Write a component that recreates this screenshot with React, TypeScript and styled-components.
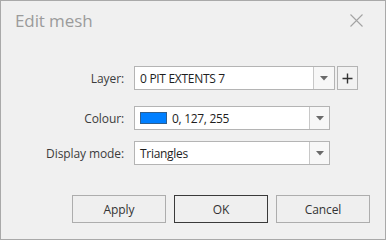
import React from 'react'
import styled, { createGlobalStyle } from 'styled-components'

const GlobalStyle = createGlobalStyle`
  html, body {
    margin: 0;
    padding: 0;
    background: #f0f0f0;
  }
  body {
    font-family: 'Open Sans', 'Noto Sans', sans-serif;
  }
`

const Dialog = styled.div`
  box-sizing: border-box;
  width: 386px;
  height: 240px;
  border: 1px solid #a9a9a9;
  background: #f0f0f0;
  display: flex;
  flex-direction: column;
`

const TitleBar = styled.div`
  display: flex;
  align-items: center;
  justify-content: space-between;
  height: 38px;
  padding: 0 22px 0 14px;
`

const Title = styled.span`
  font-size: 17px;
  color: #9b9b9b;
  letter-spacing: -0.1px;
`

const Form = styled.div`
  display: flex;
  flex-direction: column;
  margin-top: 27px;
`

const FieldRow = styled.div<{ $gap: number }>`
  display: grid;
  grid-template-columns: 114px auto;
  column-gap: 10px;
  align-items: center;
  margin-left: 9px;
  margin-bottom: ${(p) => p.$gap}px;
`

const Label = styled.label`
  text-align: right;
  font-size: 12px;
  letter-spacing: -0.1px;
  color: #3c3c3c;
`

const FieldLine = styled.div`
  display: flex;
  gap: 2px;
`

const Combo = styled.div<{ $width: number }>`
  box-sizing: border-box;
  width: ${(p) => p.$width}px;
  height: 24px;
  display: flex;
  border: 1px solid #b4b4b4;
  background: #fff;
`

const ComboText = styled.div`
  flex: 1;
  display: flex;
  align-items: center;
  gap: 5px;
  padding-left: 5px;
  font-size: 12px;
  letter-spacing: -0.3px;
  color: #1e1e1e;
  white-space: nowrap;
`

const ComboArrow = styled.div<{ $width?: number }>`
  width: ${(p) => p.$width ?? 19}px;
  border-left: 1px solid #c8c8c8;
  background: #f7f7f7;
  display: flex;
  align-items: center;
  justify-content: center;
`

const Swatch = styled.span`
  box-sizing: border-box;
  width: 27px;
  height: 12px;
  background: #007fff;
  border: 1px solid #2f5f8f;
`

const SmallButton = styled.div`
  box-sizing: border-box;
  width: 21px;
  height: 24px;
  border: 1px solid #b4b4b4;
  background: #f2f2f2;
  display: flex;
  align-items: center;
  justify-content: center;
`

const Footer = styled.div`
  margin-top: auto;
  display: flex;
  justify-content: flex-end;
  gap: 8px;
  padding: 0 15px 16px 0;
`

const Button = styled.button<{ $default?: boolean }>`
  box-sizing: border-box;
  width: 94px;
  height: 28px;
  background: #efefef;
  border: 1px solid ${(p) => (p.$default ? '#3a3a3a' : '#adadad')};
  font-family: 'Open Sans', 'Noto Sans', sans-serif;
  font-size: 12px;
  letter-spacing: -0.1px;
  color: #333;
  padding: 0;
`

const Arrow = () => (
  <svg width="8" height="5" viewBox="0 0 8 5">
    <path d="M0 0 H8 L4 4.5 Z" fill="#6a6a6a" />
  </svg>
)

const App = () => (
  <>
    <GlobalStyle />
    <Dialog>
      <TitleBar>
        <Title>Edit mesh</Title>
        <svg width="13" height="13" viewBox="0 0 13 13">
          <path d="M0.5 0.5 L12.5 12.5 M12.5 0.5 L0.5 12.5" stroke="#a3a3a3" strokeWidth="1.1" />
        </svg>
      </TitleBar>
      <Form>
        <FieldRow $gap={16}>
          <Label>Layer:</Label>
          <FieldLine>
            <Combo $width={201}>
              <ComboText>0 PIT EXTENTS 7</ComboText>
              <ComboArrow $width={20}>
                <Arrow />
              </ComboArrow>
            </Combo>
            <SmallButton>
              <svg width="11" height="11" viewBox="0 0 11 11">
                <path d="M5.5 0.5 V10.5 M0.5 5.5 H10.5" stroke="#333" strokeWidth="1.4" />
              </svg>
            </SmallButton>
          </FieldLine>
        </FieldRow>
        <FieldRow $gap={11}>
          <Label>Colour:</Label>
          <Combo $width={196}>
            <ComboText>
              <Swatch />
              0, 127, 255
            </ComboText>
            <ComboArrow>
              <Arrow />
            </ComboArrow>
          </Combo>
        </FieldRow>
        <FieldRow $gap={0}>
          <Label>Display mode:</Label>
          <Combo $width={196}>
            <ComboText>Triangles</ComboText>
            <ComboArrow>
              <Arrow />
            </ComboArrow>
          </Combo>
        </FieldRow>
      </Form>
      <Footer>
        <Button>Apply</Button>
        <Button $default>OK</Button>
        <Button>Cancel</Button>
      </Footer>
    </Dialog>
  </>
)

export default App
